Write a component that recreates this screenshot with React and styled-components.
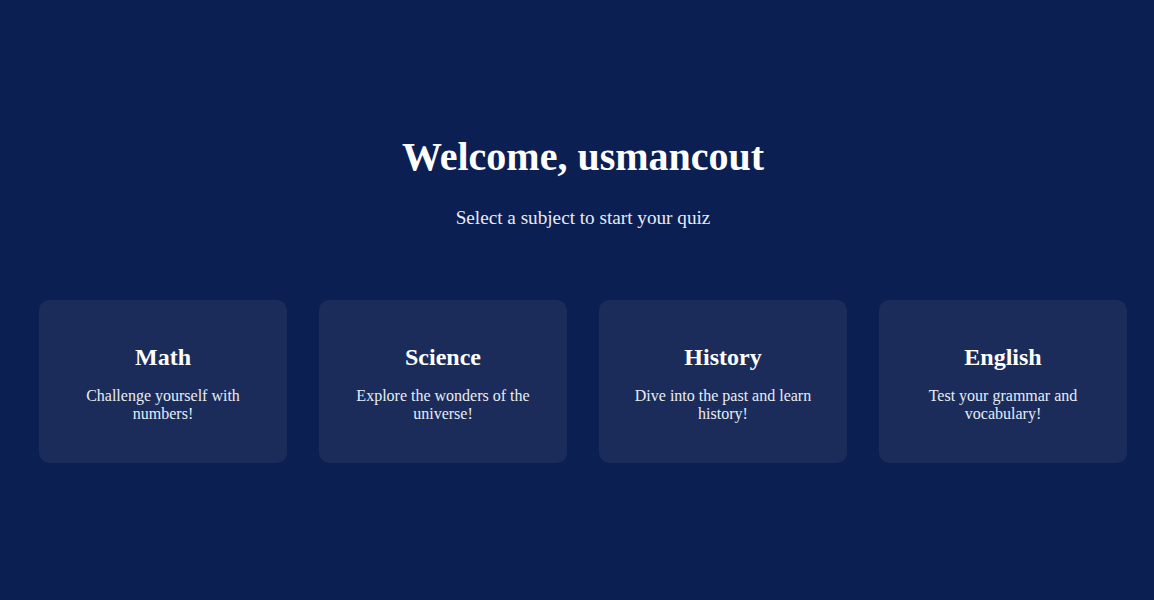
import React from "react";
import styled, { createGlobalStyle } from "styled-components";

const Global = createGlobalStyle`
  html, body {
    margin: 0;
    padding: 0;
    background: #0c1f52;
    color: #ffffff;
    font-family: "Liberation Serif", "Times New Roman", serif;
  }
`;

const Page = styled.main`
  min-height: 592px;
  box-sizing: border-box;
  padding: 134px 27px 40px 39px;
  display: flex;
  flex-direction: column;
  align-items: center;
`;

const Title = styled.h1`
  margin: 0;
  font-size: 40px;
  line-height: 46px;
  font-weight: 700;
  color: #ffffff;
`;

const Subtitle = styled.p`
  margin: 27px 0 0;
  font-size: 19.2px;
  line-height: 22px;
  color: #e8ecf6;
`;

const Grid = styled.section`
  margin-top: 71px;
  width: 100%;
  display: grid;
  grid-template-columns: repeat(4, 1fr);
  gap: 32px;
`;

const Card = styled.button`
  all: unset;
  box-sizing: border-box;
  height: 163px;
  padding: 43px 24px 0;
  border-radius: 10px;
  background: #1b2c5a;
  display: flex;
  flex-direction: column;
  align-items: center;
  text-align: center;
  cursor: pointer;
`;

const CardTitle = styled.h3`
  margin: 0;
  font-size: 24px;
  line-height: 28px;
  font-weight: 700;
  color: #ffffff;
`;

const CardText = styled.p`
  margin: 16px 0 0;
  font-size: 16px;
  line-height: 18px;
  color: #e8ecf6;
`;

const subjects = [
  { name: "Math", text: "Challenge yourself with numbers!" },
  { name: "Science", text: "Explore the wonders of the universe!" },
  { name: "History", text: "Dive into the past and learn history!" },
  { name: "English", text: "Test your grammar and vocabulary!" },
];

export default function App() {
  return (
    <>
      <Global />
      <Page>
        <Title>Welcome, usmancout</Title>
        <Subtitle>Select a subject to start your quiz</Subtitle>
        <Grid>
          {subjects.map((s) => (
            <Card key={s.name}>
              <CardTitle>{s.name}</CardTitle>
              <CardText>{s.text}</CardText>
            </Card>
          ))}
        </Grid>
      </Page>
    </>
  );
}
